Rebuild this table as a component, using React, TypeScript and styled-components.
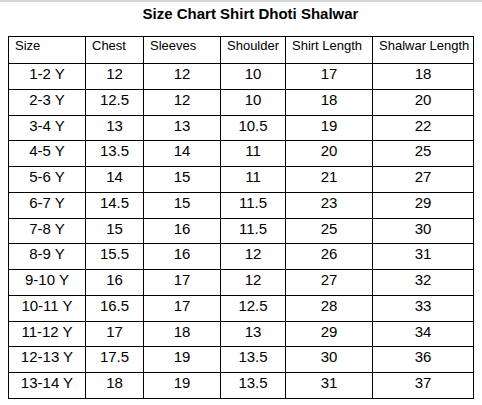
import React from "react";
import styled, { createGlobalStyle } from "styled-components";

const GlobalStyle = createGlobalStyle`
  html, body {
    margin: 0;
    padding: 0;
    background: #ffffff;
  }
  body {
    font-family: "Liberation Sans", Arial, sans-serif;
    color: #000000;
  }
`;

const Page = styled.div`
  width: 482px;
  height: 405px;
  box-sizing: border-box;
  border-top: 2px solid #d6d6d6;
  padding-top: 3px;
`;

const Title = styled.h1`
  margin: 0 0 14px;
  padding-left: 19px;
  font-size: 15px;
  font-weight: bold;
  line-height: 17px;
  text-align: center;
`;

const Table = styled.table`
  margin-left: 8px;
  width: 465px;
  table-layout: fixed;
  border-collapse: collapse;
`;

const Cell = styled.td<{ $head?: boolean }>`
  border: 1px solid #000000;
  padding: ${(p) => (p.$head ? "1px 0 0 6px" : "1px 0 0 0")};
  height: ${(p) => (p.$head ? "27px" : "25.77px")};
  box-sizing: border-box;
  vertical-align: top;
  text-align: ${(p) => (p.$head ? "left" : "center")};
  font-size: ${(p) => (p.$head ? "13px" : "15px")};
  line-height: ${(p) => (p.$head ? "15px" : "17px")};
  font-weight: normal;
  white-space: nowrap;
`;

const columns = [
  { label: "Size", width: 77 },
  { label: "Chest", width: 58 },
  { label: "Sleeves", width: 77 },
  { label: "Shoulder", width: 65 },
  { label: "Shirt Length", width: 87 },
  { label: "Shalwar Length", width: 101 },
];

const rows = [
  ["1-2 Y", "12", "12", "10", "17", "18"],
  ["2-3 Y", "12.5", "12", "10", "18", "20"],
  ["3-4 Y", "13", "13", "10.5", "19", "22"],
  ["4-5 Y", "13.5", "14", "11", "20", "25"],
  ["5-6 Y", "14", "15", "11", "21", "27"],
  ["6-7 Y", "14.5", "15", "11.5", "23", "29"],
  ["7-8 Y", "15", "16", "11.5", "25", "30"],
  ["8-9 Y", "15.5", "16", "12", "26", "31"],
  ["9-10 Y", "16", "17", "12", "27", "32"],
  ["10-11 Y", "16.5", "17", "12.5", "28", "33"],
  ["11-12 Y", "17", "18", "13", "29", "34"],
  ["12-13 Y", "17.5", "19", "13.5", "30", "36"],
  ["13-14 Y", "18", "19", "13.5", "31", "37"],
];

export default function App() {
  return (
    <>
      <GlobalStyle />
      <Page>
        <Title>Size Chart Shirt Dhoti Shalwar</Title>
        <Table>
          <colgroup>
            {columns.map((c) => (
              <col key={c.label} style={{ width: c.width }} />
            ))}
          </colgroup>
          <thead>
            <tr>
              {columns.map((c) => (
                <Cell as="th" $head key={c.label}>
                  {c.label}
                </Cell>
              ))}
            </tr>
          </thead>
          <tbody>
            {rows.map((r) => (
              <tr key={r[0]}>
                {r.map((v, i) => (
                  <Cell key={i}>{v}</Cell>
                ))}
              </tr>
            ))}
          </tbody>
        </Table>
      </Page>
    </>
  );
}
